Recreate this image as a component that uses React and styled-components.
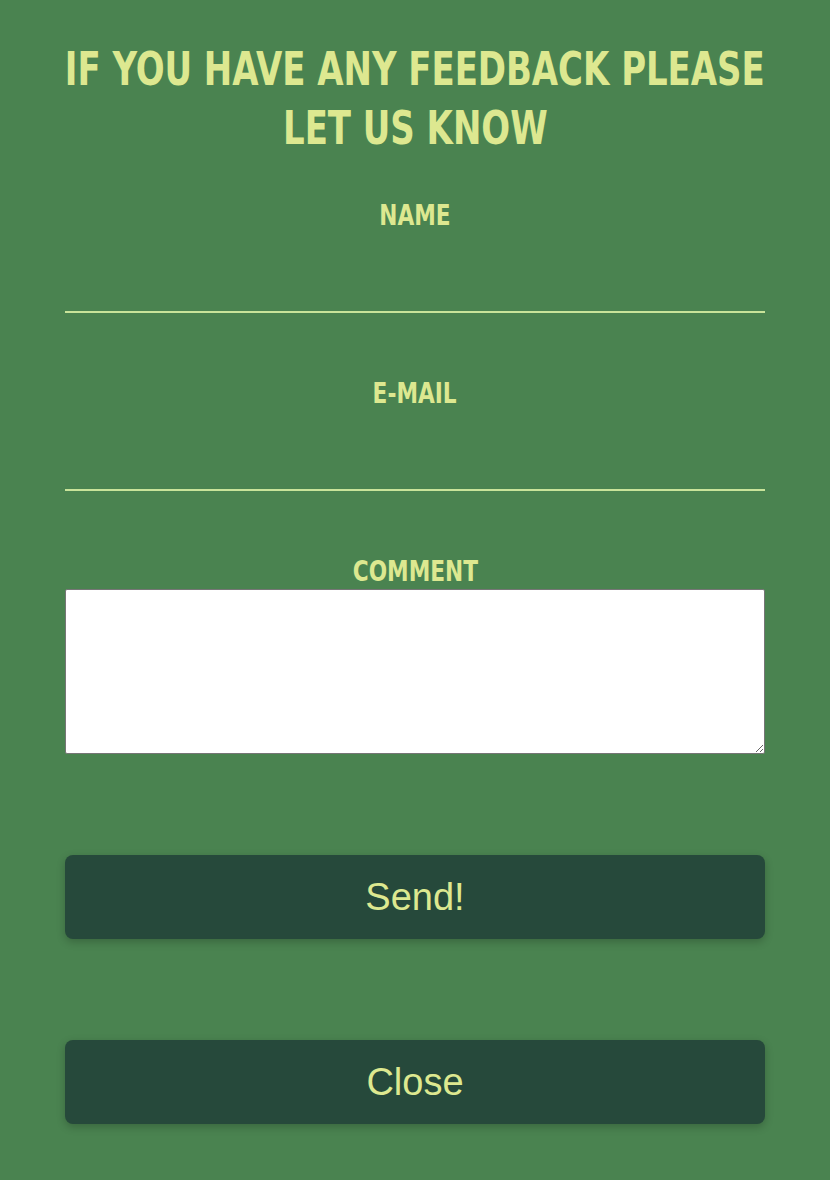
import React from "react";
import styled, { createGlobalStyle } from "styled-components";

const GlobalStyle = createGlobalStyle`
  html, body {
    margin: 0;
    padding: 0;
    background: #4a8350;
  }
  * { box-sizing: border-box; }
`;

const TEXT = "#dde890";
const CONDENSED = `"DejaVu Sans Condensed", "DejaVu Sans", sans-serif`;

const Page = styled.div`
  min-height: 1180px;
  background: #4a8350;
  padding-top: 40px;
`;

const Form = styled.form`
  width: 700px;
  margin: 0 auto;
  display: flex;
  flex-direction: column;
`;

const Title = styled.h2`
  margin: 0;
  display: flex;
  flex-direction: column;
  align-items: center;
  font-family: ${CONDENSED};
  font-weight: 700;
  font-size: 46px;
  line-height: 59px;
  color: ${TEXT};
  text-transform: uppercase;
`;

/* the reference face is a narrow semi-condensed grotesque; squeeze the closest installed face */
const Squeezed = styled.span`
  display: block;
  white-space: nowrap;
  transform: scaleX(${(p) => p.$scale || 0.83});
  transform-origin: center;
`;

const Field = styled.div`
  display: flex;
  flex-direction: column;
  margin-top: ${(p) => p.$gap}px;
`;

const Label = styled.label`
  display: flex;
  justify-content: center;
  font-family: ${CONDENSED};
  font-weight: 700;
  font-size: 29px;
  line-height: 36px;
  color: ${TEXT};
  text-transform: uppercase;
`;

const LineInput = styled.input`
  display: block;
  width: 100%;
  height: 80px;
  background: transparent;
  border: none;
  border-bottom: 2px solid #c9e49a;
  outline: none;
  color: ${TEXT};
  font-family: "Liberation Sans", sans-serif;
  font-size: 24px;
  padding: 0 4px;
`;

const Comment = styled.textarea`
  display: block;
  width: 700px;
  height: 165px;
  margin: 0;
  background: #fff;
  border: 1px solid #767676;
  border-radius: 2px;
  font-family: "Liberation Mono", monospace;
  font-size: 14px;
  padding: 2px;
`;

const Button = styled.button`
  display: block;
  width: 100%;
  height: 84px;
  margin-top: 101px;
  background: #26493b;
  color: ${TEXT};
  border: none;
  border-radius: 8px;
  font-family: "Liberation Sans", Arial, sans-serif;
  font-size: 38px;
  cursor: pointer;
  box-shadow: 0 3px 8px rgba(0, 0, 0, 0.22);
`;

export default function App() {
  return (
    <>
      <GlobalStyle />
      <Page>
        <Form onSubmit={(e) => e.preventDefault()}>
          <Title>
            <Squeezed $scale={0.82}>If you have any feedback please</Squeezed>
            <Squeezed $scale={0.82}>let us know</Squeezed>
          </Title>
          <Field $gap={39}>
            <Label htmlFor="name">
              <Squeezed>Name</Squeezed>
            </Label>
            <LineInput id="name" type="text" />
          </Field>
          <Field $gap={62}>
            <Label htmlFor="email">
              <Squeezed>E-mail</Squeezed>
            </Label>
            <LineInput id="email" type="email" />
          </Field>
          <Field $gap={62}>
            <Label htmlFor="comment">
              <Squeezed>Comment</Squeezed>
            </Label>
            <Comment id="comment" />
          </Field>
          <Button type="submit">Send!</Button>
          <Button type="button">Close</Button>
        </Form>
      </Page>
    </>
  );
}
